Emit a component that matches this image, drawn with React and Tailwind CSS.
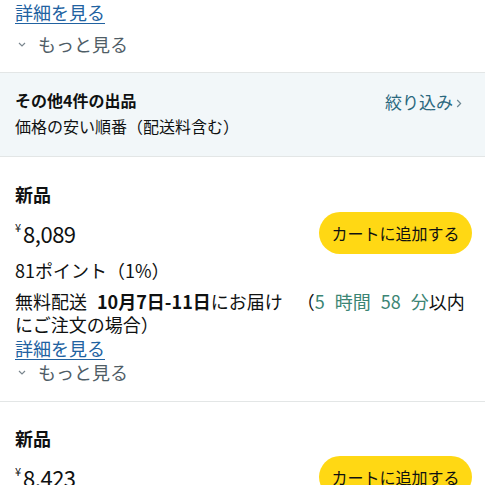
import React from "react";

const font = { fontFamily: '"Noto Sans CJK JP", "Noto Sans", sans-serif' };

function Chevron() {
  return (
    <svg width="8" height="5" viewBox="0 0 8 5" className="mr-[12px] ml-[3px]">
      <path d="M1 1 L4 4 L7 1" fill="none" stroke="#7a868e" strokeWidth="1.2" />
    </svg>
  );
}

function MoreLink() {
  return (
    <div className="flex items-center h-[24px] text-[18px] leading-[24px] text-[#4f5d66]">
      <Chevron />
      <span>もっと見る</span>
    </div>
  );
}

function DetailLink() {
  return (
    <div className="h-[24px] text-[18px] leading-[24px]">
      <span className="text-[#2162a1] underline underline-offset-[3px] decoration-[1px]">詳細を見る</span>
    </div>
  );
}

function CartButton() {
  return (
    <button className="w-[153px] h-[42px] rounded-full bg-[#ffd814] text-[16px] text-[#0f1111] flex items-center justify-center shrink-0">
      カートに追加する
    </button>
  );
}

function Price({ value }) {
  return (
    <div className="flex items-start text-[#0f1111]">
      <span className="text-[11px] leading-[14px] mt-[1px] mr-[2px]">¥</span>
      <span className="text-[22px] leading-[28px] tracking-[-0.5px]">{value}</span>
    </div>
  );
}

export default function App() {
  return (
    <div className="w-[485px] h-[485px] overflow-hidden bg-white text-[#0f1111]" style={font}>
      {/* top remainder */}
      <div className="pl-[15px] pr-[13px] pb-[16px] border-b border-[#e3e6e6]">
        <DetailLink />
        <div className="mt-[8px]">
          <MoreLink />
        </div>
      </div>

      {/* header grey */}
      <div className="bg-[#f2f7f9] pl-[15px] pr-[23px] pt-[15px] pb-[18px] border-b border-[#e3e6e6] flex justify-between">
        <div className="flex flex-col gap-[2px]">
          <div className="text-[16px] leading-[24px] font-bold">その他4件の出品</div>
          <div className="text-[16px] leading-[24px]">価格の安い順番（配送料含む）</div>
        </div>
        <div className="flex items-center h-[28px] text-[17px] text-[#2b687e]">
          <span>絞り込み</span>
          <svg width="6" height="9" viewBox="0 0 6 9" className="ml-[3px] mt-[2px]">
            <path d="M1.2 1 L4.6 4.5 L1.2 8" fill="none" stroke="#6c8793" strokeWidth="1.2" />
          </svg>
        </div>
      </div>

      {/* offer 1 */}
      <div className="pl-[15px] pr-[13px] pt-[25px] pb-[17px] border-b border-[#e3e6e6]">
        <div className="text-[18px] leading-[24px] font-bold">新品</div>
        <div className="mt-[6px] flex items-center justify-between">
          <Price value="8,089" />
          <CartButton />
        </div>
        <div className="mt-[4px] text-[18px] leading-[24px]">81ポイント（1%）</div>
        <div className="mt-[8px] text-[18px] leading-[23px]">
          <div className="whitespace-nowrap">
            無料配送<span className="ml-[10px] font-bold">10月7日-11日</span>にお届け<span className="ml-[14px]">（</span>
            <span className="text-[#3b8574]">
              5<span className="ml-[10px]">時間</span>
              <span className="ml-[10px]">58</span>
              <span className="ml-[10px]">分</span>
            </span>
            以内
          </div>
          <div>にご注文の場合）</div>
        </div>
        <DetailLink />
        <MoreLink />
      </div>

      {/* offer 2 */}
      <div className="pl-[15px] pr-[13px] pt-[24px]">
        <div className="text-[18px] leading-[24px] font-bold">新品</div>
        <div className="mt-[6px] flex items-center justify-between">
          <Price value="8,423" />
          <CartButton />
        </div>
      </div>
    </div>
  );
}
